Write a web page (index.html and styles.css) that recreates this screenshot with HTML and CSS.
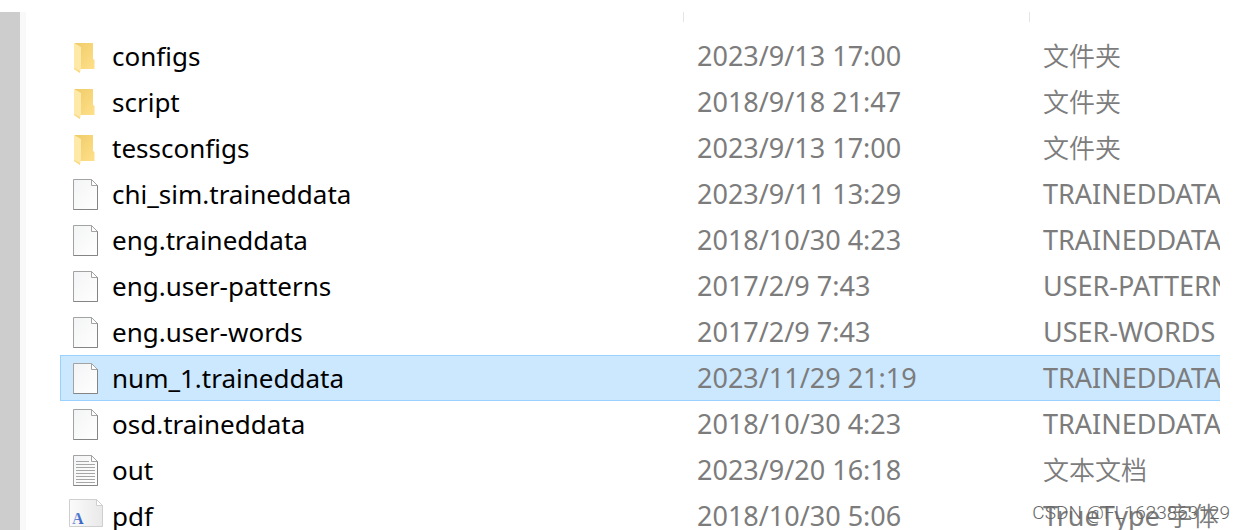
FILE: index.html
```html
<!DOCTYPE html>
<html lang="zh-CN">
<head>
  <meta charset="UTF-8">
  <title>tessdata</title>
  <link rel="stylesheet" href="styles.css">
</head>
<body>
  <!-- shared icons -->
  <svg class="sprite" aria-hidden="true">
    <defs>
      <linearGradient id="gold" x1="0" y1="0" x2="1" y2="1">
        <stop offset="0" stop-color="#efcb68"/>
        <stop offset="1" stop-color="#ffe08a"/>
      </linearGradient>
      <linearGradient id="paper" x1="0" y1="0" x2="1" y2="1">
        <stop offset="0" stop-color="#f3f4f5"/>
        <stop offset="1" stop-color="#ffffff"/>
      </linearGradient>
      <linearGradient id="fontPaper" x1="0" y1="0" x2="1" y2="0">
        <stop offset="0" stop-color="#fbfbfb"/>
        <stop offset="1" stop-color="#e9e9ea"/>
      </linearGradient>
      <linearGradient id="mark" x1="0" y1="0" x2="1" y2="0">
        <stop offset="0" stop-color="#8fa8e0"/>
        <stop offset="1" stop-color="#2450bd"/>
      </linearGradient>
    </defs>
    <symbol id="folder" viewBox="0 0 36 34">
      <path fill="url(#gold)" d="M5 4h19v16l1.500 1v9H11V9z"/>
      <path fill="#ffe9a8" d="M5 4l7 4v20l-1 6-6-4z"/>
      <path fill="#f9d980" d="M5 29l6 3v2l-6-4z"/>
    </symbol>
    <symbol id="file" viewBox="0 0 36 34">
      <path fill="url(#paper)" stroke="#a3a3a3" d="M4.500 2.500h18l6 6v24h-24z"/>
      <path fill="#fff" stroke="#a3a3a3" d="M22.500 2.500v6h6z"/>
      <path fill="none" stroke="#858585" d="M4.500 32.500h24v-24"/>
    </symbol>
    <symbol id="text" viewBox="0 0 36 34">
      <use href="#file"/>
      <path stroke="#a6a6a6" d="M7 8.500h13M7 11.500h19M7 14.500h19M7 17.500h19M7 20.500h19M7 23.500h19M7 26.500h19M7 29.500h19"/>
    </symbol>
    <symbol id="font" viewBox="0 0 36 34">
      <path fill="url(#fontPaper)" stroke="#cfcfcf" d="M.5 .5h27l6 6v21H.5z"/>
      <path fill="#fff" stroke="#cfcfcf" d="M27.500 .5v6h6z"/>
      <text class="font-mark" x="3" y="25">A</text>
    </symbol>
  </svg>

  <div class="explorer">
    <div class="scrollbar"></div>
    <main class="pane">
      <table class="files">
        <colgroup>
          <col class="col-name">
          <col class="col-date">
          <col class="col-type">
        </colgroup>
        <thead>
          <tr><th></th><th></th><th></th></tr>
        </thead>
        <tbody>
          <tr>
            <td><div class="name"><svg class="icon"><use href="#folder"/></svg>configs</div></td>
            <td>2023/9/13 17:00</td>
            <td><span class="zh">文件夹</span></td>
          </tr>
          <tr>
            <td><div class="name"><svg class="icon"><use href="#folder"/></svg>script</div></td>
            <td>2018/9/18 21:47</td>
            <td><span class="zh">文件夹</span></td>
          </tr>
          <tr>
            <td><div class="name"><svg class="icon"><use href="#folder"/></svg>tessconfigs</div></td>
            <td>2023/9/13 17:00</td>
            <td><span class="zh">文件夹</span></td>
          </tr>
          <tr>
            <td><div class="name"><svg class="icon"><use href="#file"/></svg>chi_sim.traineddata</div></td>
            <td>2023/9/11 13:29</td>
            <td>TRAINEDDATA</td>
          </tr>
          <tr>
            <td><div class="name"><svg class="icon"><use href="#file"/></svg>eng.traineddata</div></td>
            <td>2018/10/30 4:23</td>
            <td>TRAINEDDATA</td>
          </tr>
          <tr>
            <td><div class="name"><svg class="icon"><use href="#file"/></svg>eng.user-patterns</div></td>
            <td>2017/2/9 7:43</td>
            <td>USER-PATTERN</td>
          </tr>
          <tr>
            <td><div class="name"><svg class="icon"><use href="#file"/></svg>eng.user-words</div></td>
            <td>2017/2/9 7:43</td>
            <td>USER-WORDS</td>
          </tr>
          <tr class="selected">
            <td><div class="name"><svg class="icon"><use href="#file"/></svg>num_1.traineddata</div></td>
            <td>2023/11/29 21:19</td>
            <td>TRAINEDDATA</td>
          </tr>
          <tr>
            <td><div class="name"><svg class="icon"><use href="#file"/></svg>osd.traineddata</div></td>
            <td>2018/10/30 4:23</td>
            <td>TRAINEDDATA</td>
          </tr>
          <tr>
            <td><div class="name"><svg class="icon"><use href="#text"/></svg>out</div></td>
            <td>2023/9/20 16:18</td>
            <td><span class="zh">文本文档</span></td>
          </tr>
          <tr>
            <td><div class="name"><svg class="icon"><use href="#font"/></svg>pdf</div></td>
            <td>2018/10/30 5:06</td>
            <td>TrueType <span class="zh">字体</span></td>
          </tr>
        </tbody>
      </table>
    </main>
  </div>
  <div class="watermark">
    <p>CSDN @FL1623863129</p>
    <p class="faded">CSDN</p>
  </div>
</body>
</html>
```

FILE: styles.css
```css
* {
  margin: 0;
  padding: 0;
  box-sizing: border-box;
}
body {
  height: 100vh;
  overflow: hidden;
  background: #fff;
  color: #000;
  font-family: "Noto Sans", "Noto Sans CJK SC", sans-serif;
  font-size: 26px;
}
.sprite {
  position: absolute;
  width: 0;
  height: 0;
}
.explorer {
  display: flex;
  height: 100%;
  padding: 12px 20px 0 0;
}
.scrollbar {
  flex: 0 0 26px;
  background: #cdcdcd;
  border-right: 6px solid #f9f9f9;
}
.pane {
  flex: 1;
  min-width: 0;
  padding-left: 34px;
  overflow: hidden;
}
.files {
  width: 100%;
  table-layout: fixed;
  border-collapse: separate;
  border-spacing: 0;
}
.col-name {
  width: 624px;
}
.col-date {
  width: 346px;
}
th {
  height: 10px;
  border-right: 1px solid #e5e5e5;
}
th:last-child {
  border-right: none;
}
thead::after {
  content: "";
  display: block;
  height: 11px;
}
td {
  height: 46px;
  padding-left: 13px;
  overflow: hidden;
  color: #7c7c7c;
  font-size: 27px;
  line-height: 44px;
  white-space: nowrap;
  border: 1px solid transparent;
  border-width: 1px 0;
}
td:first-child {
  padding-left: 8px;
  border-left-width: 1px;
}
.name {
  display: flex;
  align-items: center;
  gap: 7px;
  color: #000;
  font-size: 26px;
}
.icon {
  flex: none;
  width: 36px;
  height: 34px;
}
.font-mark {
  fill: url(#mark);
  font: bold 16px "Liberation Serif", serif;
}
.zh {
  font-family: "Noto Sans CJK SC", sans-serif;
  font-size: 26px;
  font-weight: 350;
  line-height: 1;
}
.selected td {
  background: #cce8ff;
  border-color: #99d1ff;
}
.watermark {
  position: absolute;
  right: 10px;
  bottom: 0;
  height: 29px;
  overflow: hidden;
  color: #666;
  font-family: Roboto, sans-serif;
  font-size: 19px;
  font-weight: 300;
  line-height: 24px;
}
.watermark .faded {
  padding-left: 8px;
  color: #bbb;
}
```
